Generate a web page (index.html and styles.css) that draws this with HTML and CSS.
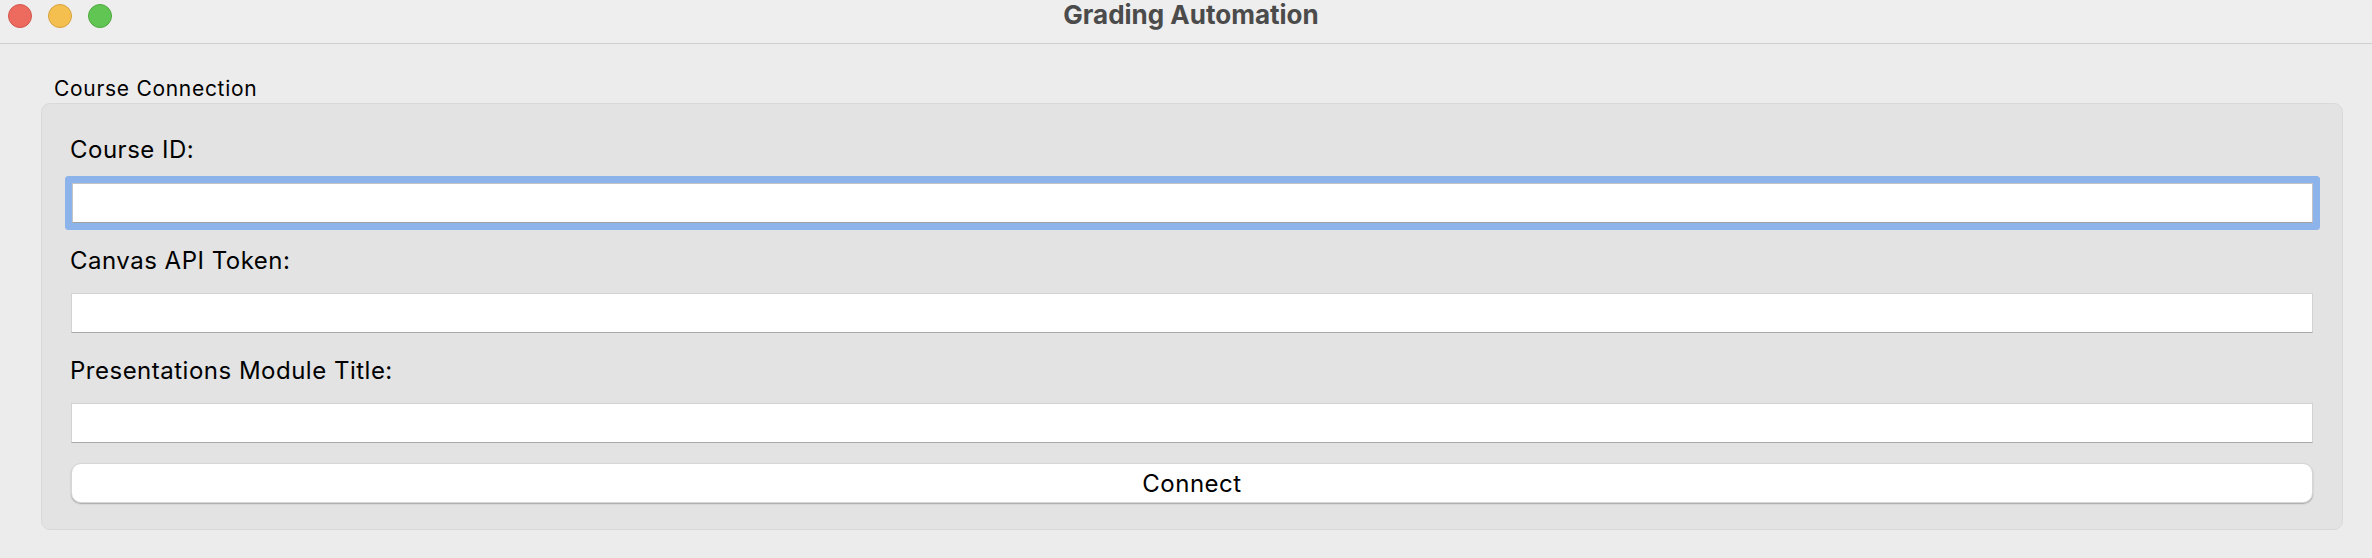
FILE: index.html
```html
<!DOCTYPE html>
<html>
<head>
<meta charset="utf-8">
<title>Grading Automation</title>
<link rel="stylesheet" href="styles.css">
</head>
<body>
<div class="window">
  <header class="titlebar">
    <div class="lights">
      <span class="light red"></span>
      <span class="light yellow"></span>
      <span class="light green"></span>
    </div>
    <div class="title">Grading Automation</div>
  </header>
  <main class="content">
    <div class="group-label">Course Connection</div>
    <section class="group">
      <label class="field-label">Course ID:</label>
      <div class="input focused"></div>
      <label class="field-label">Canvas API Token:</label>
      <div class="input"></div>
      <label class="field-label">Presentations Module Title:</label>
      <div class="input"></div>
      <button class="button">Connect</button>
    </section>
  </main>
</div>
</body>
</html>
```
FILE: styles.css
```css
html, body {
  margin: 0;
  padding: 0;
}
body {
  width: 2372px;
  height: 558px;
  background: #ececec;
  font-family: Inter, "Noto Sans", "Liberation Sans", sans-serif;
  color: #000;
  overflow: hidden;
}
.window {
  display: flex;
  flex-direction: column;
  height: 558px;
}
.titlebar {
  position: relative;
  height: 44px;
  box-sizing: border-box;
  border-bottom: 1px solid #cfcfcf;
  background: #eeeeee;
  display: flex;
  align-items: center;
  justify-content: center;
}
.lights {
  position: absolute;
  left: 8px;
  top: 4px;
  display: flex;
  gap: 16px;
}
.light {
  width: 24px;
  height: 24px;
  border-radius: 50%;
  box-sizing: border-box;
}
.red { background: #ed6a5e; border: 1px solid #d2574d; }
.yellow { background: #f5bf4f; border: 1px solid #d6a23e; }
.green { background: #61c554; border: 1px solid #4fa93f; }
.title {
  font-size: 26px;
  font-weight: 700;
  color: #4b4b4b;
  margin-top: -14px;
  margin-left: 10px;
}
.content {
  padding: 0 29px 0 41px;
}
.group-label {
  font-size: 21px;
  letter-spacing: 0.7px;
  line-height: 24px;
  margin: 33px 0 0 13px;
  height: 26px;
}
.group {
  background: #e3e3e3;
  border: 1px solid #d9d9d9;
  border-radius: 9px;
  padding: 32px 29px 26px 29px;
  display: flex;
  flex-direction: column;
}
.field-label {
  font-size: 24px;
  letter-spacing: 0.5px;
  line-height: 28px;
  margin-left: -1px;
  margin-top: 24px;
}
.field-label:first-child {
  margin-top: 0;
}
.input {
  height: 40px;
  box-sizing: border-box;
  background: #fff;
  border: 1px solid #d2d2d2;
  border-bottom-color: #a9a9a9;
  margin-top: 18px;
}
.input.focused {
  margin-top: 19px;
  margin-left: 1px;
  border-color: #c4c4c4;
  border-bottom-color: #a0a0a0;
  box-shadow: 0 0 0 7px #8cb4ea;
  border-radius: 1px;
}
.button {
  margin-top: 20px;
  height: 40px;
  background: #fff;
  border: 1px solid #d6d6d6;
  border-radius: 10px;
  box-shadow: 0 1px 1.5px rgba(0,0,0,0.28);
  font-family: inherit;
  font-size: 24px;
  letter-spacing: 0.5px;
  color: #000;
  padding: 0;
}
```
